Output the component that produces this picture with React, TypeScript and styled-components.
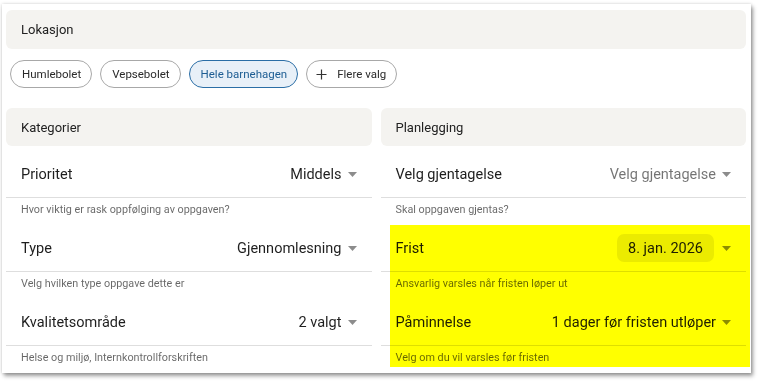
import React from "react";
import styled, { createGlobalStyle } from "styled-components";

const GlobalStyle = createGlobalStyle`
  html, body { margin: 0; padding: 0; background: #ffffff; }
  body { font-family: Roboto, "Noto Sans", Arial, sans-serif; color: #202020; }
  * { box-sizing: border-box; }
`;

const Page = styled.div`
  padding: 4px 9px 9px 2px;
`;

const Card = styled.div`
  width: 749px;
  height: 369px;
  background: #ffffff;
  padding: 6px 5px 6px 4px;
  box-shadow: 0 0 3px rgba(0, 0, 0, 0.18), 2px 3px 4px rgba(0, 0, 0, 0.38);
`;

const SectionHeader = styled.div<{ $h?: number }>`
  height: ${(p) => p.$h ?? 38}px;
  background: #f4f3f0;
  border-radius: 6px;
  display: flex;
  align-items: center;
  padding: 0 15px;
  font-size: 13px;
  color: #222222;
`;

const ChipRow = styled.div`
  display: flex;
  gap: 8px;
  padding-left: 4px;
  margin: 11px 0 20px;
`;

const Chip = styled.button<{ $active?: boolean; $icon?: boolean }>`
  height: 28px;
  display: inline-flex;
  align-items: center;
  gap: 10px;
  padding: 0 10px 0 ${(p) => (p.$icon ? 9 : 11)}px;
  border-radius: 14px;
  font-family: Roboto, "Noto Sans", Arial, sans-serif;
  font-size: 11.5px;
  border: 1px solid ${(p) => (p.$active ? "#2b6ea6" : "#a8a8a8")};
  background: ${(p) => (p.$active ? "#e8f0f8" : "#ffffff")};
  color: ${(p) => (p.$active ? "#1d5d93" : "#2a2a2a")};
`;

const Columns = styled.div`
  display: grid;
  grid-template-columns: 1fr 1fr;
  gap: 9px;
`;

const Column = styled.div`
  display: flex;
  flex-direction: column;
  gap: 6px;
  & > ${SectionHeader} {
    margin-bottom: -1px;
  }
`;

const Group = styled.div`
  display: flex;
  flex-direction: column;
`;

const Row = styled.div`
  height: 47px;
  display: flex;
  align-items: center;
  justify-content: space-between;
  padding: 0 15px;
  border-bottom: 1px solid rgba(0, 0, 0, 0.13);
  font-size: 14.5px;
`;

const Label = styled.span`
  color: #1e1e1e;
`;

const Value = styled.span<{ $placeholder?: boolean }>`
  display: inline-flex;
  align-items: center;
  gap: 6px;
  color: ${(p) => (p.$placeholder ? "rgba(0,0,0,0.55)" : "rgba(0,0,0,0.88)")};
`;

const Pill = styled.span`
  height: 28px;
  display: inline-flex;
  align-items: center;
  padding: 0 11px;
  margin-right: 2px;
  border-radius: 7px;
  background: rgba(0, 0, 0, 0.08);
`;

const Helper = styled.div`
  height: 21px;
  padding: 5px 15px 0;
  font-size: 10.8px;
  line-height: 14px;
  color: rgba(0, 0, 0, 0.6);
`;

const Highlight = styled.div`
  position: relative;
  display: flex;
  flex-direction: column;
  gap: 6px;
  &::after {
    content: "";
    position: absolute;
    top: 0;
    bottom: 0;
    left: 9px;
    right: -4px;
    background: #ffff00;
    mix-blend-mode: multiply;
    pointer-events: none;
  }
`;

const Caret = () => (
  <svg width="9" height="5" viewBox="0 0 9 5" style={{ display: "block" }}>
    <polygon points="0,0 9,0 4.5,5" fill="#8c8c8c" />
  </svg>
);

const Plus = () => (
  <svg width="11" height="11" viewBox="0 0 11 11" style={{ display: "block" }}>
    <path d="M5.5 0.5v10M0.5 5.5h10" stroke="#333" strokeWidth="1.2" fill="none" />
  </svg>
);

type FieldProps = {
  label: string;
  value: string;
  helper: string;
  placeholder?: boolean;
  pill?: boolean;
};

const Field = ({ label, value, helper, placeholder, pill }: FieldProps) => (
  <Group>
    <Row>
      <Label>{label}</Label>
      <Value $placeholder={placeholder}>
        {pill ? <Pill>{value}</Pill> : value}
        <Caret />
      </Value>
    </Row>
    <Helper>{helper}</Helper>
  </Group>
);

export default function App() {
  return (
    <Page>
      <GlobalStyle />
      <Card>
        <SectionHeader $h={39}>Lokasjon</SectionHeader>
        <ChipRow>
          <Chip>Humlebolet</Chip>
          <Chip>Vepsebolet</Chip>
          <Chip $active>Hele barnehagen</Chip>
          <Chip $icon>
            <Plus />
            Flere valg
          </Chip>
        </ChipRow>
        <Columns>
          <Column>
            <SectionHeader>Kategorier</SectionHeader>
            <Field label="Prioritet" value="Middels" helper="Hvor viktig er rask oppfølging av oppgaven?" />
            <Field label="Type" value="Gjennomlesning" helper="Velg hvilken type oppgave dette er" />
            <Field label="Kvalitetsområde" value="2 valgt" helper="Helse og miljø, Internkontrollforskriften" />
          </Column>
          <Column>
            <SectionHeader>Planlegging</SectionHeader>
            <Field label="Velg gjentagelse" value="Velg gjentagelse" placeholder helper="Skal oppgaven gjentas?" />
            <Highlight>
              <Field label="Frist" value="8. jan. 2026" pill helper="Ansvarlig varsles når fristen løper ut" />
              <Field label="Påminnelse" value="1 dager før fristen utløper" helper="Velg om du vil varsles før fristen" />
            </Highlight>
          </Column>
        </Columns>
      </Card>
    </Page>
  );
}
